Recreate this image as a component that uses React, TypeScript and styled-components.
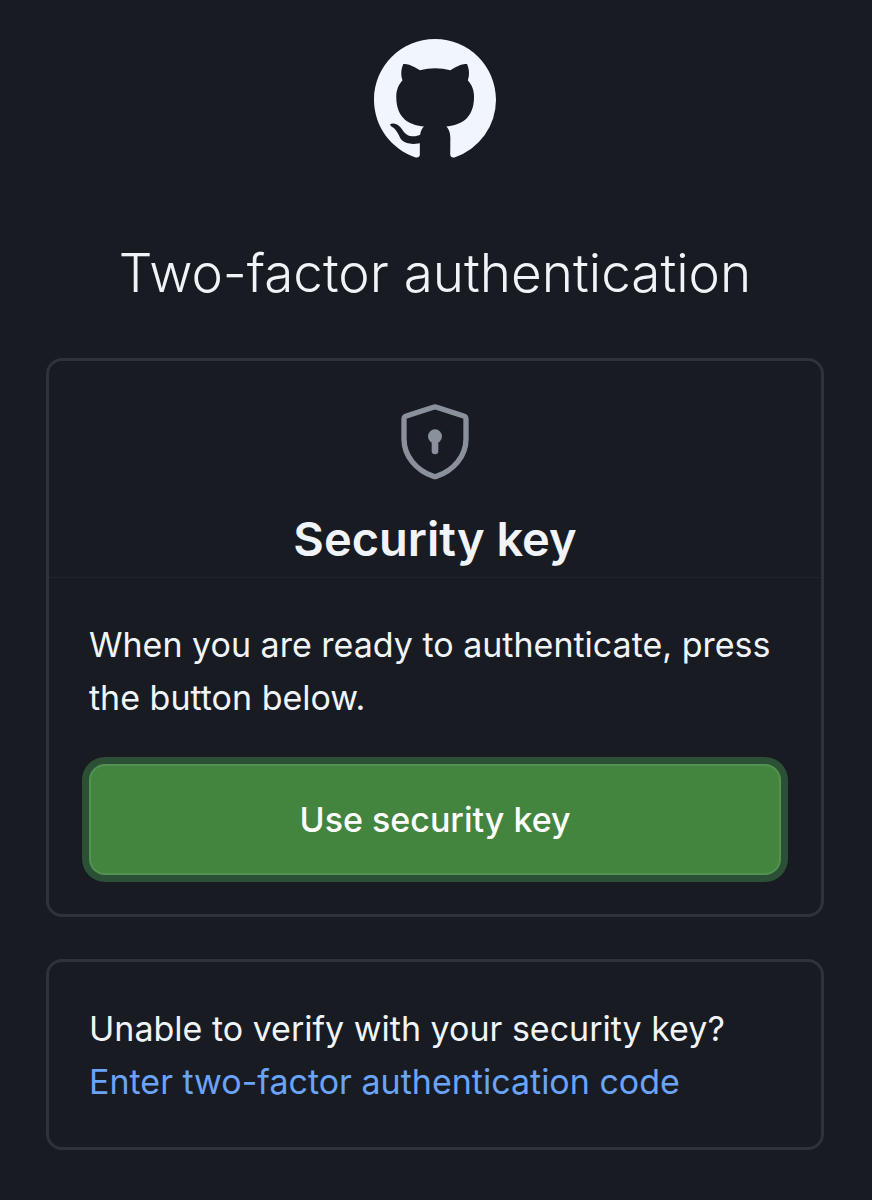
import React from "react";
import styled, { createGlobalStyle } from "styled-components";

const GlobalStyle = createGlobalStyle`
  * { box-sizing: border-box; }
  body {
    margin: 0;
    background: #181b22;
    color: #f0f4f9;
    font-family: Inter, "Liberation Sans", sans-serif;
    font-size: 34px;
    line-height: 53px;
  }
`;

const Page = styled.div`
  display: flex;
  flex-direction: column;
  min-height: 100vh;
  padding: 0 48px 50px 46px;
`;

const Header = styled.header`
  display: flex;
  flex-direction: column;
  align-items: center;
  padding-top: 39px;
`;

const HomeLink = styled.a`
  display: block;
  color: #f0f6fc;
`;

const Icon = styled.svg`
  display: block;
`;

const Title = styled.h1`
  margin: 76px 0 47px;
  font-size: 53px;
  line-height: 76px;
  font-weight: 300;
  text-align: center;
`;

const Main = styled.main`
  display: flex;
  flex-direction: column;
  gap: 42px;
`;

const Card = styled.section`
  border: 3px solid #2e323a;
  border-radius: 16px;
`;

const CardHead = styled.div`
  display: flex;
  flex-direction: column;
  align-items: center;
  padding: 43px 24px 0;
  border-bottom: 1px solid #20252c;
`;

const CardTitle = styled.h2`
  margin: 26px 0 5px;
  font-size: 47px;
  line-height: 66px;
  font-weight: 600;
`;

const CardBody = styled.div`
  padding: 40px 40px 39px;
`;

const Text = styled.p`
  margin: 0;
`;

const PrimaryButton = styled.button`
  display: block;
  width: 100%;
  margin-top: 40px;
  padding: 27px 24px;
  border: 2px solid #529252;
  border-radius: 16px;
  background: #43853f;
  box-shadow: 0 0 0 7px #2c5036;
  color: #ffffff;
  font: inherit;
  font-weight: 500;
  cursor: pointer;
`;

const FallbackLink = styled.a`
  color: #6aa3f8;
  text-decoration: none;
`;

export default function App() {
  return (
    <>
      <GlobalStyle />
      <Page>
        <Header>
          <HomeLink href="#" aria-label="GitHub">
            <Icon width="122" height="120" viewBox="0 0 16 15.8" preserveAspectRatio="none" fill="currentColor" aria-hidden="true">
              <path d="M8 0C3.58 0 0 3.58 0 8c0 3.54 2.29 6.53 5.47 7.59.4.07.55-.17.55-.38 0-.19-.01-.82-.01-1.49-2.01.37-2.53-.49-2.69-.94-.09-.23-.48-.94-.82-1.13-.28-.15-.68-.52-.01-.53.63-.01 1.08.58 1.23.82.72 1.21 1.87.87 2.33.66.07-.52.28-.87.51-1.07-1.78-.2-3.64-.89-3.64-3.95 0-.87.31-1.59.82-2.15-.08-.2-.36-1.02.08-2.12 0 0 .67-.21 2.2.82.64-.18 1.32-.27 2-.27s1.36.09 2 .27c1.53-1.04 2.2-.82 2.2-.82.44 1.1.16 1.92.08 2.12.51.56.82 1.27.82 2.15 0 3.07-1.87 3.75-3.65 3.95.29.25.54.73.54 1.48 0 1.07-.01 1.93-.01 2.2 0 .21.15.46.55.38A8.01 8.01 0 0 0 16 8c0-4.42-3.58-8-8-8Z" />
            </Icon>
          </HomeLink>
          <Title>Two-factor authentication</Title>
        </Header>
        <Main>
          <Card>
            <CardHead>
              <Icon width="68" height="76" viewBox="48 41 204 228" fill="none" stroke="#8b919c" strokeLinejoin="round" strokeLinecap="round" aria-hidden="true">
                <path strokeWidth="16" d="M145 51Q150 49 155 51L236 77Q243 79 243 87V145C243 198 206 240 155 258Q150 260 145 258C94 240 57 198 57 145V87Q57 79 64 77Z" />
                <circle cx="150" cy="138" r="21" fill="#8b919c" stroke="none" />
                <path strokeWidth="20" d="M150 145V182" />
              </Icon>
              <CardTitle>Security key</CardTitle>
            </CardHead>
            <CardBody>
              <Text>When you are ready to authenticate, press the button below.</Text>
              <PrimaryButton type="button">Use security key</PrimaryButton>
            </CardBody>
          </Card>
          <Card>
            <CardBody>
              <Text>Unable to verify with your security key?</Text>
              <FallbackLink href="#">Enter two-factor authentication code</FallbackLink>
            </CardBody>
          </Card>
        </Main>
      </Page>
    </>
  );
}
